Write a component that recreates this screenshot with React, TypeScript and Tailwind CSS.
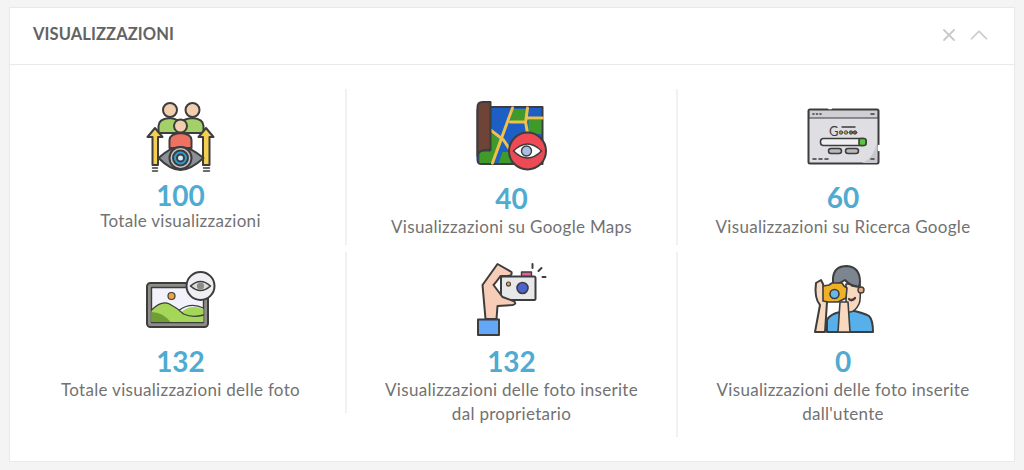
import type { ReactNode } from "react";
import { ChevronUp, X } from "lucide-react";

const ink = "#3d3d3d";

function PeopleIcon() {
  return (
    <svg width="80" height="80" viewBox="140.5 97 80 80" strokeLinejoin="round" strokeLinecap="round">
      <g stroke={ink} strokeWidth="2">
        <path d="M158 133 v-7 q0 -7 11 -8 q11 1 11 8 v7 z" fill="#a3d069" />
        <path d="M180 133 v-7 q0 -7 12 -8 q11 1 11 8 v7 z" fill="#a3d069" />
        <circle cx="169.5" cy="110" r="7" fill="#f1cfae" />
        <circle cx="192" cy="110" r="7" fill="#f1cfae" />
        <path d="M147 137 L154.5 128 L162 137 H157.5 V165 H152 V137 z" fill="#f5d050" />
        <path d="M198 137 L205.5 128 L213 137 H209 V165 H202.5 V137 z" fill="#f5d050" />
        <path d="M169 148 v-8 q0 -6 11 -7 q11 1 11 7 v8 z" fill="#ee7262" />
        <circle cx="180" cy="126" r="6.5" fill="#f1cfae" />
        <path d="M158 158 Q170 147 180 147 Q190 147 203 158 Q190 170 180 170 Q170 170 158 158 z" fill="#8b8f96" />
        <circle cx="180" cy="158" r="11" fill="#c4c6ca" />
        <circle cx="180" cy="158" r="7.5" fill="#2f9bd0" />
        <circle cx="180" cy="158" r="3.5" fill="#d8eef8" />
      </g>
      <path d="M152 168 h5 M152 171 h5 M203 168 h6 M203 171 h6" stroke={ink} strokeWidth="1.5" />
    </svg>
  );
}

function MapIcon() {
  return (
    <svg width="80" height="80" viewBox="471.5 97 80 80" strokeLinejoin="round" strokeLinecap="round">
      <path d="M480 107 H542 V164 H481 Q477 164 477 160 V110 z" fill="#1d5fc4" stroke={ink} strokeWidth="2" />
      <path d="M513 109 H526 V122 H509 z M528 120 H541 V134 H528 z M490 133 L502 141 L492 163 H479 V152 H490 z M502 152 H514 L510 163 H498 z" fill="#3f9a2a" />
      <path d="M512 108 L492 163 M490 130 L503 140 L511 152 M510 122 H525 L527 133 M527 108 L525 123 M527 118 H542" stroke="#f0c04a" strokeWidth="3" fill="none" />
      <path d="M482 102 H490 V150 Q478 149 477 156 V107 Q477 102 482 102 z" fill="#6e4437" stroke={ink} strokeWidth="2" />
      <circle cx="527" cy="151" r="18.5" fill="#ee4a55" stroke={ink} strokeWidth="2" />
      <path d="M513 151 Q527 137 541 151 Q527 165 513 151 z" fill="#fff" stroke={ink} strokeWidth="1.6" />
      <circle cx="526" cy="151" r="5" fill="#a9bde0" stroke={ink} strokeWidth="1.4" />
    </svg>
  );
}

function BrowserIcon() {
  return (
    <svg width="80" height="80" viewBox="803 97 80 80" strokeLinejoin="round" strokeLinecap="round">
      <rect x="808.5" y="109.5" width="70" height="54" rx="1.5" fill="#dfdfe3" stroke={ink} strokeWidth="2" />
      <path d="M809 118 H878 V110 H809 z" fill="#cfcfd5" stroke={ink} strokeWidth="1.2" />
      <path d="M862 163 Q874 158 877 142 V163 z" fill="#c8c8ce" />
      <path d="M829 108 h2 M879 146 v4" stroke="#fff" strokeWidth="2.5" />
      <path d="M813 114 h1 M816.5 114 h1 M820 114 h1 M871 114 h3 M813 159 h3 M819 159 h3 M825 159 h3 M871 159 h3" stroke={ink} strokeWidth="1.6" />
      <text x="829" y="136" fontFamily="Lato, sans-serif" fontSize="13" fill={ink}>G</text>
      <path d="M842 127 H855" stroke={ink} strokeWidth="1.4" />
      <circle cx="841" cy="132.5" r="1.8" fill="#a38a3a" stroke={ink} strokeWidth="0.8" />
      <circle cx="846" cy="132.5" r="1.8" fill="#b3a24a" stroke={ink} strokeWidth="0.8" />
      <circle cx="851" cy="132.5" r="1.8" fill="#4c7a3c" stroke={ink} strokeWidth="0.8" />
      <circle cx="855" cy="132.5" r="1.8" fill="#96483f" stroke={ink} strokeWidth="0.8" />
      <rect x="820.5" y="138.5" width="45.5" height="7" rx="3" fill="#efeff1" stroke={ink} strokeWidth="1.6" />
      <rect x="859" y="138.5" width="7" height="7" rx="2" fill="#58c93a" stroke={ink} strokeWidth="1.6" />
      <rect x="828.5" y="148.5" width="13" height="5" rx="2.5" fill="#b9b9be" stroke={ink} strokeWidth="1.5" />
      <rect x="845.5" y="148.5" width="13" height="5" rx="2.5" fill="#b9b9be" stroke={ink} strokeWidth="1.5" />
    </svg>
  );
}

function PhotoIcon() {
  return (
    <svg width="80" height="80" viewBox="140.5 260 80 80" strokeLinejoin="round" strokeLinecap="round">
      <rect x="146.5" y="283" width="61" height="44" rx="3.5" fill="#8f8d88" stroke={ink} strokeWidth="2" />
      <rect x="151" y="287.5" width="52" height="35" fill="#f3f2fa" stroke={ink} strokeWidth="1.4" />
      <path d="M151 310 Q161 300 169 304 Q177 308 181 312 Q190 304 203 309 V322 H151 z" fill="#a4d65a" />
      <path d="M151 322 V312 Q162 312 170 322 z" fill="#6f9e34" />
      <path d="M151 310 Q161 300 169 304 Q177 308 183 314 Q192 318 203 315 M179 310 Q190 302 203 308" fill="none" stroke={ink} strokeWidth="1.3" />
      <circle cx="171" cy="296" r="3.5" fill="#f0a33d" stroke={ink} strokeWidth="1.2" />
      <circle cx="200" cy="286" r="14" fill="#eeeef3" stroke={ink} strokeWidth="2" />
      <path d="M190 286 Q200 277 210 286 Q200 295 190 286 z" fill="#dcdcdc" stroke={ink} strokeWidth="1.6" />
      <circle cx="200" cy="286" r="3.6" fill="#8c8c86" />
    </svg>
  );
}

function HandCameraIcon() {
  return (
    <svg width="80" height="80" viewBox="471.5 260 80 80" strokeLinejoin="round" strokeLinecap="round">
      <rect x="521" y="272" width="10" height="5" fill="#e0609a" stroke={ink} strokeWidth="1.4" />
      <rect x="500.5" y="276.5" width="34.5" height="23.5" rx="1.5" fill="#e8e8ea" stroke={ink} strokeWidth="2" />
      <path d="M497 264 L511 272 Q512 276 507 276 L500 276 Q495 283 493 285 L502 297 L513 301 Q517 304 512 305 L497 306 L496 319 H485 L482 285 z" fill="#f8cdb7" stroke={ink} strokeWidth="2" />
      <path d="M477.5 319.5 H498.5 V335 H477.5 z" fill="#62a7f8" stroke={ink} strokeWidth="2" />
      <circle cx="522" cy="288" r="5.5" fill="#4b62cf" stroke={ink} strokeWidth="1.6" />
      <circle cx="508" cy="284" r="2" fill="#e8b534" stroke={ink} strokeWidth="1.1" />
      <path d="M532 264 v4 M541 268 l-3 3 M542 277 h3" stroke={ink} strokeWidth="2" />
    </svg>
  );
}

function PhotographerIcon() {
  return (
    <svg width="80" height="80" viewBox="803 260 80 80" strokeLinejoin="round" strokeLinecap="round">
      <path d="M827 332 V320 Q830 314 840 312 L850 310 Q864 313 869 316 Q873 320 873 332 z" fill="#57b0ea" stroke={ink} strokeWidth="2" />
      <path d="M846 312 V304 L846 284 L860 284 Q861 300 859 304 Q855 312 850 312 z" fill="#f8d9bf" stroke={ink} strokeWidth="1.6" />
      <circle cx="861" cy="290" r="3" fill="#e9ab82" stroke={ink} strokeWidth="1.4" />
      <path d="M833 284 V278 Q834 266 847 266 Q860 267 860 282 L859 287 Q850 286 845 280 L838 284 z" fill="#7d8591" stroke={ink} strokeWidth="2" />
      <path d="M849 299 Q852 302 855 298" stroke={ink} strokeWidth="2.2" fill="#e33a3a" />
      <path d="M852 286 h4" stroke={ink} strokeWidth="1.5" />
      <path d="M838 332 L840 302 H848 L850 332 z" fill="#f8d9bf" stroke={ink} strokeWidth="1.6" />
      <path d="M815 332 L820 305 Q814 298 816 283 L821 280 L823 284 L827 302 L825 332 z" fill="#f8d9bf" stroke={ink} strokeWidth="2" />
      <path d="M823 286 L829 285 L832 283 H842 L844 286 L847 288 L846 298 L838 302 H828 L823 301 z" fill="#eeb128" stroke={ink} strokeWidth="1.6" />
      <circle cx="834.5" cy="294" r="4.5" fill="#69b7ea" stroke={ink} strokeWidth="1.6" />
    </svg>
  );
}

type Cell = {
  id: string;
  icon: ReactNode;
  value: string;
  label: ReactNode;
  box: string;
  valueClass: string;
  labelClass: string;
};

const cells: Cell[] = [
  {
    id: "totale",
    icon: <PeopleIcon />,
    value: "100",
    label: "Totale visualizzazioni",
    box: "h-[156px] border-r-2 border-[#f1f1f1]",
    valueClass: "mt-[4px]",
    labelClass: "mt-0",
  },
  {
    id: "maps",
    icon: <MapIcon />,
    value: "40",
    label: "Visualizzazioni su Google Maps",
    box: "h-[156px] border-r-2 border-[#f1f1f1]",
    valueClass: "mt-[7px]",
    labelClass: "mt-[3px]",
  },
  {
    id: "ricerca",
    icon: <BrowserIcon />,
    value: "60",
    label: "Visualizzazioni su Ricerca Google",
    box: "h-[156px]",
    valueClass: "mt-[6px]",
    labelClass: "mt-[4px]",
  },
  {
    id: "foto",
    icon: <PhotoIcon />,
    value: "132",
    label: "Totale visualizzazioni delle foto",
    box: "h-[161px] border-r-2 border-[#f1f1f1]",
    valueClass: "mt-[7px]",
    labelClass: "mt-[3px]",
  },
  {
    id: "proprietario",
    icon: <HandCameraIcon />,
    value: "132",
    label: (
      <>
        Visualizzazioni delle foto inserite
        <br />
        dal proprietario
      </>
    ),
    box: "h-[185px] border-r-2 border-[#f1f1f1]",
    valueClass: "mt-[7px]",
    labelClass: "mt-[3px]",
  },
  {
    id: "utente",
    icon: <PhotographerIcon />,
    value: "0",
    label: (
      <>
        Visualizzazioni delle foto inserite
        <br />
        dall'utente
      </>
    ),
    box: "h-[185px]",
    valueClass: "mt-[7px]",
    labelClass: "mt-[3px]",
  },
];

export default function App() {
  return (
    <div className="h-[470px] overflow-hidden bg-[#f4f4f4] px-[9px] pt-[7px] font-['Lato',sans-serif]">
      <div className="border border-[#e9e9e9] bg-white">
        <div className="flex h-[57px] items-center justify-between border-b border-[#e9e9e9] pb-[3px] pl-[23px] pr-5">
          <h2 className="text-[16.5px] font-bold tracking-[0.1px] text-[#636363]">VISUALIZZAZIONI</h2>
          <div className="flex items-center gap-[5px] text-[#c9c9c9]">
            <X size={20} strokeWidth={2.2} />
            <ChevronUp size={30} strokeWidth={1.4} />
          </div>
        </div>
        <div className="grid grid-cols-[331px_331px_330px] items-start gap-y-[7px] pb-6 pl-[6px] pt-6">
          {cells.map((c) => (
            <div key={c.id} className={`flex flex-col items-center pt-2 text-center ${c.box}`}>
              {c.icon}
              <div className={`text-[28px] font-bold leading-[28px] text-[#4fabd1] ${c.valueClass}`}>
                {c.value}
              </div>
              <p className={`text-[17px] leading-6 tracking-[0.3px] text-[#727272] ${c.labelClass}`}>{c.label}</p>
            </div>
          ))}
        </div>
      </div>
    </div>
  );
}
